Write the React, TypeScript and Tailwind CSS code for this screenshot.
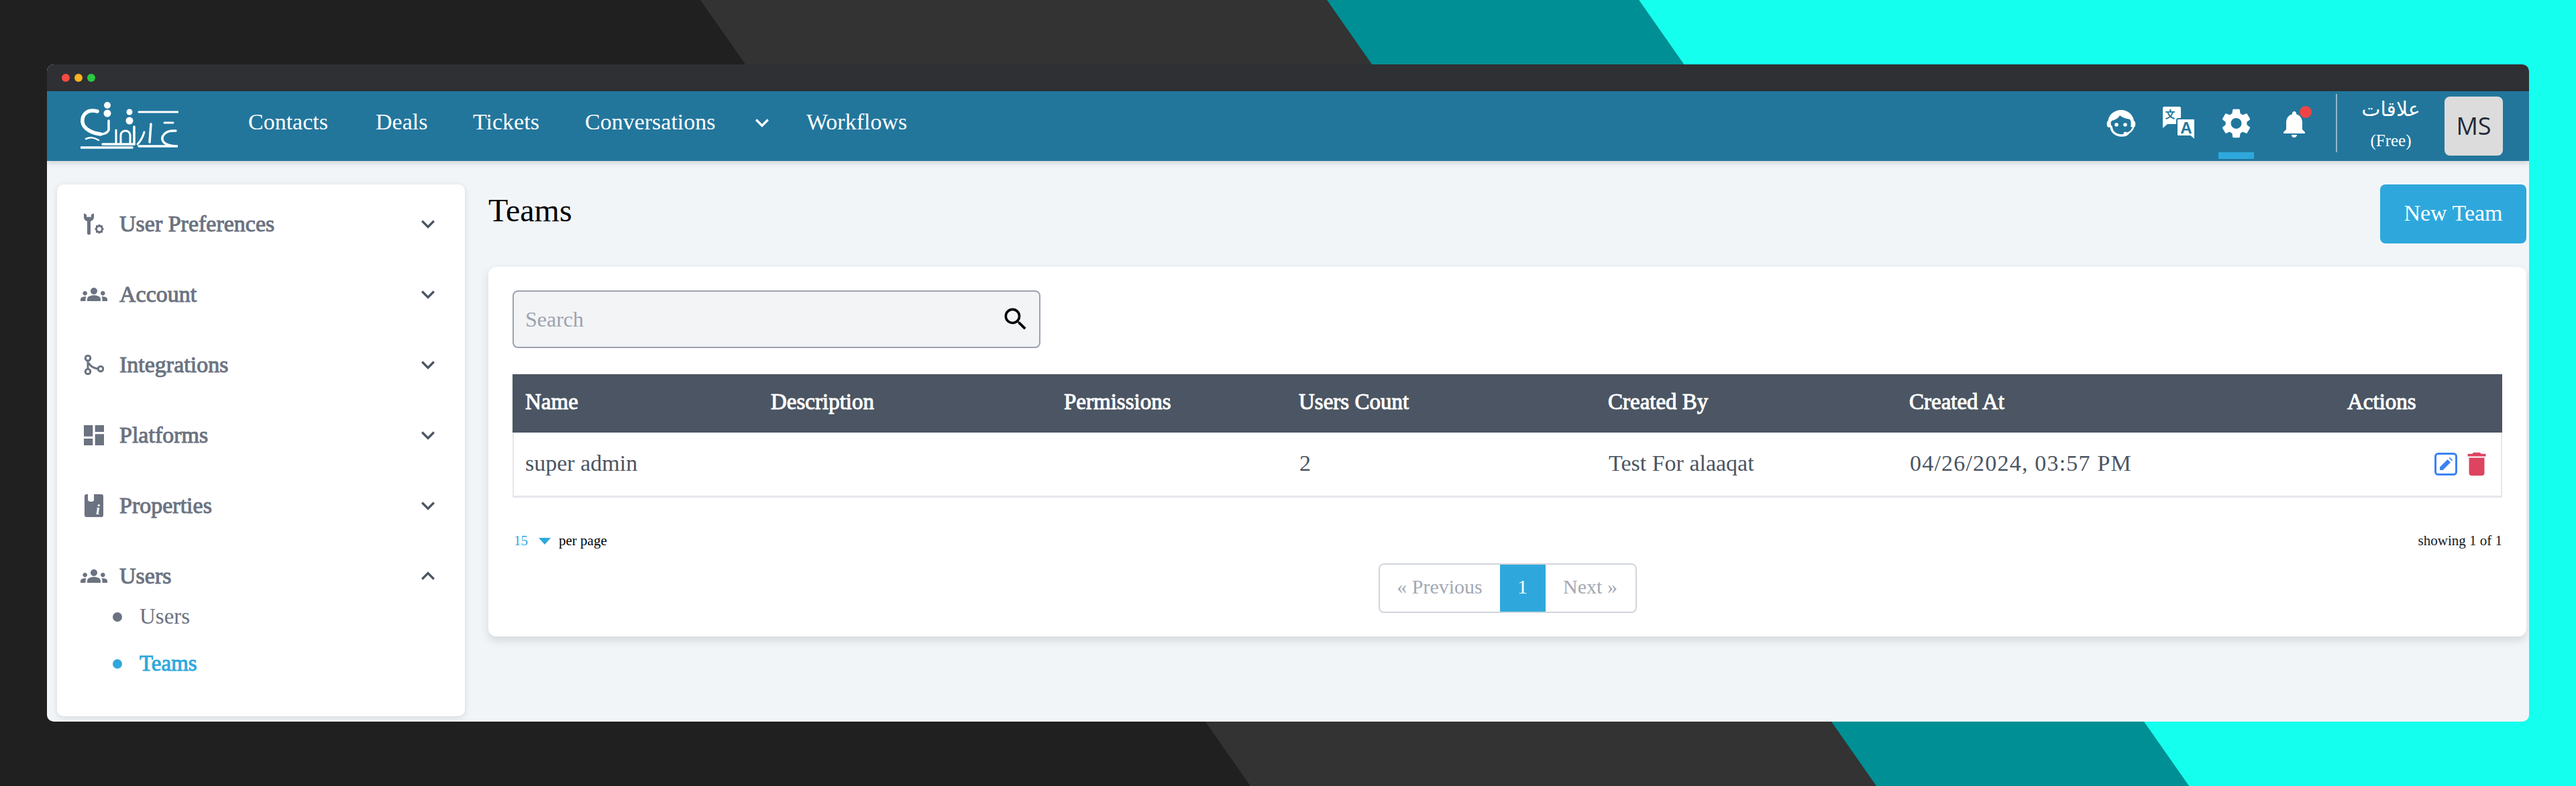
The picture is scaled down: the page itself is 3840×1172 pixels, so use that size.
import React from "react";
import { MdGroups, MdDashboard, MdDelete, MdSettings, MdNotifications, MdSearch, MdKeyboardArrowDown, MdKeyboardArrowUp } from "react-icons/md";

const serif = "font-['Liberation_Serif','Noto_Sans',serif]";

function Backdrop() {
  return (
    <svg className="absolute inset-0" width="3840" height="1172" viewBox="0 0 3840 1172">
      <rect width="3840" height="1172" fill="#202020" />
      <polygon points="1044,0 1978,0 2797,1172 1864,1172" fill="#333333" />
      <polygon points="1978,0 2443,0 3263,1172 2797,1172" fill="#008f94" />
      <polygon points="2443,0 3840,0 3840,1172 3263,1172" fill="#14ffee" />
    </svg>
  );
}

function Logo() {
  return (
    <svg width="146" height="72" viewBox="0 0 146 72" fill="none" stroke="#fff" strokeLinecap="round">
      <circle cx="40" cy="5" r="5" fill="#fff" stroke="none" />
      <circle cx="40" cy="17" r="5.500" fill="#fff" stroke="none" />
      <circle cx="73" cy="15" r="4.500" fill="#fff" stroke="none" />
      <circle cx="73" cy="28" r="5.500" fill="#fff" stroke="none" />
      <path d="M87 15H145" strokeWidth="3" />
      <path d="M125 31H138" strokeWidth="3" />
      <path d="M25 14C9 10 2 20 3 30C4 40 18 47 30 48" strokeWidth="5.500" />
      <path d="M30 48C36 48 40 46 42 42V28" strokeWidth="3.500" />
      <path d="M33 63H80" strokeWidth="3.500" />
      <path d="M80 37V63" strokeWidth="3.500" />
      <path d="M53 42V63" strokeWidth="3" />
      <path d="M60 63V50C60 45 64 43 67 43C71 43 74 46 74 50V63" strokeWidth="3" />
      <path d="M105 33L103 60" strokeWidth="3.500" />
      <path d="M95 45C93 52 90 58 85 63" strokeWidth="3" />
      <path d="M142 43C126 42 118 52 124 60C128 64 135 66 145 66H87" strokeWidth="3.500" />
      <path d="M8 55C15 52 20 53 27 57" strokeWidth="2.500" />
      <path d="M1 68H77" strokeWidth="3.500" />
    </svg>
  );
}

function FaceIcon() {
  return (
    <svg width="46" height="42" viewBox="0 0 46 42" fill="none">
      <path d="M8 26C9 34 15 39 24 39C28 39 31 38 33 36" stroke="#fff" strokeWidth="3.500" strokeLinecap="round" />
      <path d="M23 1C12 1 4 9 3.500 17C1 18 1 26 4 27L9 26C7 22 7 19 9 17C14 16 19 13 21 9C24 12 30 14 36 15C38 18 38 22 37 26L42 27C45 26 45 18 42 17C41 9 34 1 23 1Z" fill="#fff" />
      <path d="M41 27C39 32 36 35 31 36" stroke="#fff" strokeWidth="2.500" strokeLinecap="round" />
      <circle cx="29" cy="36" r="2.500" fill="#fff" />
      <circle cx="16" cy="23" r="2.800" fill="#fff" />
      <circle cx="29" cy="23" r="2.800" fill="#fff" />
    </svg>
  );
}

function TranslateIcon() {
  return (
    <svg width="50" height="50" viewBox="0 0 50 50">
      <path d="M3 0H26C27 0 28 1 28 2V24C28 25 27 26 26 26H8L1 32V2C1 1 2 0 3 0Z" fill="#fff" />
      <text x="12" y="17" textAnchor="middle" fontSize="15" fontWeight="700" fontFamily="'Noto Sans CJK SC',sans-serif" fill="#22769c">文</text>
      <path d="M24 18H47C48 18 49 19 49 20V50L42 44H24C23 44 22 43 22 42V20C22 19 23 18 24 18Z" fill="#fff" stroke="#22769c" strokeWidth="2" />
      <text x="36" y="40" textAnchor="middle" fontSize="24" fontWeight="700" fontFamily="'Liberation Sans',sans-serif" fill="#22769c">A</text>
    </svg>
  );
}

function PrefIcon() {
  return (
    <svg width="30" height="33" viewBox="0 0 30 33" fill="#6b7280">
      <path d="M0 1V6C0 10 2 12 5 13V31C5 32 6 33 7 33H8C9 33 10 32 10 31V13C13 12 15 10 15 6V1L11 3V6.500H4V3Z" />
      <path d="M23 17L25 19H28V22L30 24.500L28 27V30H25L23 32L21 30H18V27L16 24.500L18 22V19H21Z" />
      <circle cx="23" cy="24.500" r="3" fill="#fff" />
    </svg>
  );
}

function RouteIcon() {
  return (
    <svg width="30" height="30" viewBox="0 0 30 30" fill="none" stroke="#6b7280" strokeWidth="3">
      <circle cx="6" cy="5" r="3.800" />
      <circle cx="6" cy="25" r="3.800" />
      <circle cx="25" cy="21" r="3.800" />
      <path d="M6 9V21" />
      <path d="M7 12C10 18 15 20 21 21" />
    </svg>
  );
}

function PropIcon() {
  return (
    <svg width="28" height="34" viewBox="0 0 28 34">
      <path d="M3 0H5V8C5 10 7 11 9 11H11C13 11 14 10 14 8V0H25C27 0 28 1 28 3V31C28 33 27 34 25 34H3C1 34 0 33 0 31V3C0 1 1 0 3 0Z" fill="#6b7280" />
      <text x="20" y="30" textAnchor="middle" fontSize="21" fontStyle="italic" fontWeight="700" fontFamily="'Liberation Serif',serif" fill="#fff">i</text>
    </svg>
  );
}

function EditIcon() {
  return (
    <svg width="34" height="34" viewBox="0 0 34 34" fill="none">
      <rect x="1.500" y="1.500" width="31" height="31" rx="4" stroke="#3b82f6" strokeWidth="3" />
      <path d="M8 26V21.500L19.500 10L24 14.500L12.500 26Z" fill="#3b82f6" />
      <path d="M21.500 8L23 7L27 11L26 12.500Z" fill="#3b82f6" />
    </svg>
  );
}

type Row = { label: string; icon: React.ReactNode; open?: boolean };

const rows: Row[] = [
  { label: "User Preferences", icon: <PrefIcon /> },
  { label: "Account", icon: <MdGroups size={40} color="#6b7280" /> },
  { label: "Integrations", icon: <RouteIcon /> },
  { label: "Platforms", icon: <MdDashboard size={40} color="#6b7280" /> },
  { label: "Properties", icon: <PropIcon /> },
  { label: "Users", icon: <MdGroups size={40} color="#6b7280" />, open: true },
];

function SideRow({ label, icon, open }: Row) {
  return (
    <div className="flex h-[105px] items-center pr-[35px]">
      <div className="flex w-[93px] shrink-0 items-center justify-center pl-[17px]">{icon}</div>
      <span className="flex-1 text-[34px] text-[#6b7280] [-webkit-text-stroke:1px_#6b7280]">{label}</span>
      {open ? <MdKeyboardArrowUp size={40} color="#4b5563" /> : <MdKeyboardArrowDown size={40} color="#4b5563" />}
    </div>
  );
}

function Sidebar() {
  return (
    <aside className="h-[793px] w-[608px] shrink-0 rounded-[10px] bg-white pt-[6px] shadow-[0_2px_8px_rgba(0,0,0,0.12)]">
      {rows.map((r) => (
        <SideRow key={r.label} {...r} />
      ))}
      <div className="-mt-[26px] flex h-[70px] items-center gap-[26px] pl-[83px] text-[33px] text-[#6b7280]">
        <span className="size-[14px] rounded-full bg-[#6b7280]" />
        <span>Users</span>
      </div>
      <div className="flex h-[70px] items-center gap-[26px] pl-[83px] text-[33px] text-[#2ea8dc] [-webkit-text-stroke:1px_#2ea8dc]">
        <span className="size-[14px] rounded-full bg-[#2ea8dc]" />
        <span>Teams</span>
      </div>
    </aside>
  );
}

const cols = [
  { label: "Name", w: "w-[366px]" },
  { label: "Description", w: "w-[437px]" },
  { label: "Permissions", w: "w-[350px]" },
  { label: "Users Count", w: "w-[461px]" },
  { label: "Created By", w: "w-[449px]" },
  { label: "Created At", w: "w-[653px]" },
];

function Table() {
  return (
    <div className="mt-[39px] w-[2966px] border-x-2 border-b-[3px] border-[#e5e7eb]">
      <div className="-mx-[2px] flex h-[87px] items-center bg-[#4b5563] pb-[3px] pl-[19px] text-[33px] text-white [-webkit-text-stroke:1px_#fff]">
        {cols.map((c) => (
          <span key={c.label} className={c.w}>{c.label}</span>
        ))}
        <span>Actions</span>
      </div>
      <div className="flex h-[94px] items-center pl-[17px] text-[34px] text-[#4b5563]">
        <span className="w-[1154px] pb-[3px]">super admin</span>
        <span className="w-[461px] pb-[3px]">2</span>
        <span className="w-[449px] pb-[3px]">Test For alaaqat</span>
        <span className="w-[653px] pb-[3px] tracking-[1.2px]">04/26/2024, 03:57 PM</span>
        <span className="flex flex-1 items-center justify-end gap-[6px] pr-[13px]">
          <EditIcon />
          <MdDelete size={46} color="#dc4460" />
        </span>
      </div>
    </div>
  );
}

function Pager() {
  return (
    <div className="mt-[18px] flex justify-center">
      <div className="flex h-[74px] w-[385px] items-stretch rounded-[8px] border-2 border-[#d1d5db] text-[30px] text-[#a3a9b3]">
        <span className="flex w-[179px] items-center justify-center pb-[6px]">« Previous</span>
        <span className="flex w-[68px] items-center justify-center bg-[#2ea8dc] pb-[6px] text-white">1</span>
        <span className="flex flex-1 items-center justify-center pb-[6px]">Next »</span>
      </div>
    </div>
  );
}

function Main() {
  return (
    <main className="ml-[35px] flex w-[3038px] flex-col">
      <div className="flex h-[88px] items-start justify-between">
        <h1 className="mt-[11px] text-[48px] leading-[56px] text-black">Teams</h1>
        <button className="h-[88px] w-[218px] rounded-[8px] bg-[#2ea8dc] pb-[3px] text-[34px] text-white">New Team</button>
      </div>
      <section className="mt-[35px] h-[551px] rounded-[12px] bg-white pl-[36px] pr-[36px] pt-[35px] shadow-[0_6px_14px_rgba(0,0,0,0.12)]">
        <div className="flex h-[86px] w-[787px] items-center justify-between rounded-[8px] border-2 border-[#9ca3af] bg-[#f3f4f6] pl-[17px] pr-[13px]">
          <span className="text-[32px] text-[#9ca3af]">Search</span>
          <MdSearch size={44} color="#000" />
        </div>
        <Table />
        <div className="mt-[50px] flex h-[30px] w-[2966px] items-center justify-between">
          <div className="flex items-center text-[21px] text-black">
            <span className="w-[39px] pl-[2px] text-[#2ea8dc]">15</span>
            <span className="mr-[12px] h-0 w-0 border-x-[9px] border-t-[10px] border-x-transparent border-t-[#2ea8dc]" />
            <span>per page</span>
          </div>
          <span className="text-[21px] text-[#111827]">showing 1 of 1</span>
        </div>
        <Pager />
      </section>
    </main>
  );
}

function NavBar() {
  return (
    <header className="relative z-10 flex h-[104px] items-center bg-[#22769c] text-white shadow-[0_3px_8px_rgba(0,0,0,0.15)]">
      <div className="ml-[50px] w-[250px]"><Logo /></div>
      <nav className="flex items-center pb-[14px] text-[34px]">
        <span className="w-[190px]">Contacts</span>
        <span className="w-[145px]">Deals</span>
        <span className="w-[167px]">Tickets</span>
        <span className="w-[244px]">Conversations</span>
        <span className="w-[86px]"><MdKeyboardArrowDown size={40} color="#fff" className="mt-[4px]" /></span>
        <span>Workflows</span>
      </nav>
      <div className="ml-auto flex h-full items-center">
        <div className="flex w-[46px] justify-center pb-[8px]"><FaceIcon /></div>
        <div className="ml-[38px] flex w-[50px] justify-center pb-[8px]"><TranslateIcon /></div>
        <div className="relative ml-[34px] flex h-full w-[53px] items-center justify-center pb-[8px]">
          <MdSettings size={54} color="#fff" />
          <span className="absolute bottom-[3px] left-0 h-[10px] w-[53px] bg-[#2ea8dc]" />
        </div>
        <div className="relative ml-[36px] flex w-[48px] justify-center pb-[6px]">
          <MdNotifications size={54} color="#fff" />
          <span className="absolute -right-[2px] top-0 size-[18px] rounded-full bg-[#ef4444]" />
        </div>
        <div className="ml-[38px] mt-[4px] h-[87px] w-[2px] self-start bg-[#8fb8cc]" />
        <div className="ml-[36px] flex w-[88px] flex-col items-center self-start pt-[4px]">
          <span className="font-['Noto_Sans','DejaVu_Sans',sans-serif] text-[30px] leading-[44px]" dir="rtl">علاقات</span>
          <span className="mt-[11px] text-[25px] leading-[30px]">(Free)</span>
        </div>
        <div className="ml-[36px] mr-[39px] flex h-[88px] w-[87px] items-center justify-center rounded-[8px] bg-[#dcdcdc] font-['Open_Sans',sans-serif] text-[36px] text-[#1f2937]">MS</div>
      </div>
    </header>
  );
}

export default function App() {
  return (
    <div className={`relative h-[1172px] w-[3840px] overflow-hidden ${serif}`}>
      <Backdrop />
      <div className="relative pl-[70px] pt-[96px]">
        <div className="h-[980px] w-[3700px] overflow-hidden rounded-[10px] bg-[#f2f5f8]">
          <div className="flex h-[40px] items-center gap-[7px] bg-[#2f3033] pl-[22px]">
            <span className="size-[12px] rounded-full bg-[#f44b42]" />
            <span className="size-[12px] rounded-full bg-[#fbb322]" />
            <span className="size-[12px] rounded-full bg-[#2bc840]" />
          </div>
          <NavBar />
          <div className="flex pl-[15px] pt-[35px]">
            <Sidebar />
            <Main />
          </div>
        </div>
      </div>
    </div>
  );
}
